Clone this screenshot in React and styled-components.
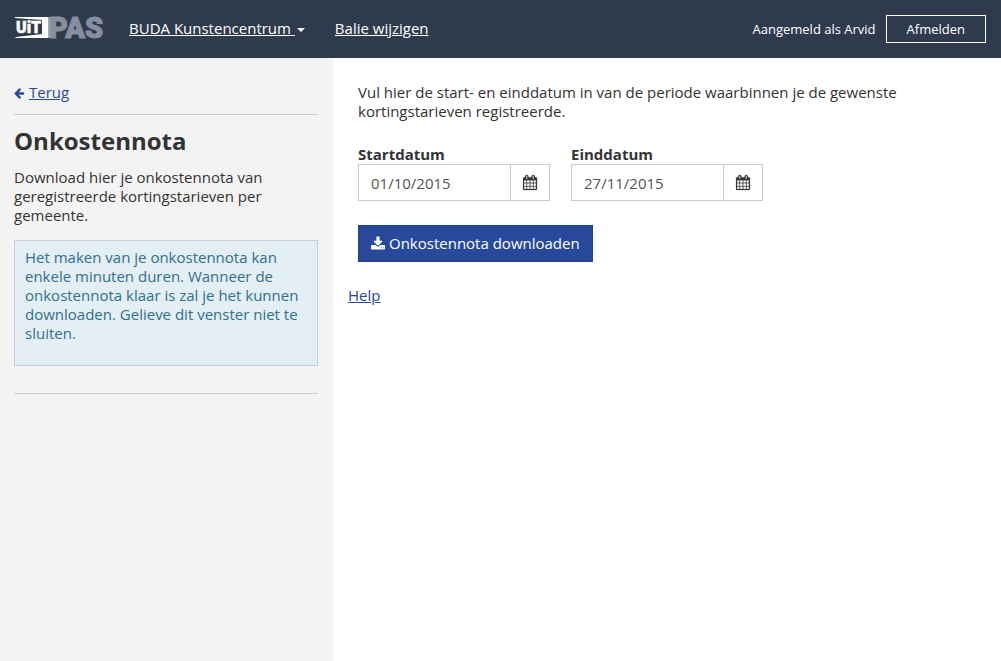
import React, { useState } from "react";
import styled, { createGlobalStyle } from "styled-components";

const GlobalStyle = createGlobalStyle`
  *, *::before, *::after { box-sizing: border-box; }
  body {
    margin: 0;
    background: #fff;
    color: #333;
    font-family: "Open Sans", sans-serif;
    font-size: 15px;
    line-height: 19px;
  }
  input, button { font: inherit; border-radius: 0; margin: 0; }
`;

const Page = styled.div`
  min-height: 100vh;
  display: flex;
  flex-direction: column;
`;

const Header = styled.header`
  display: flex;
  align-items: center;
  justify-content: space-between;
  min-height: 58px;
  padding: 0 15px;
  background: #2f3a4d;
  color: #fff;
`;

const Nav = styled.nav`
  display: flex;
  align-items: center;
  padding-bottom: 2px;
`;

const LogoLink = styled.a`
  display: block;
  margin-right: 22px;
`;

const NavLink = styled.a`
  display: flex;
  align-items: center;
  margin-right: 30px;
  color: #fff;
  white-space: pre;
`;

const Caret = styled.span`
  margin-left: 2px;
  margin-top: 4px;
  border-top: 4px solid #fff;
  border-left: 4px solid transparent;
  border-right: 4px solid transparent;
`;

const Account = styled.div`
  display: flex;
  align-items: center;
  gap: 10px;
  font-size: 13px;
`;

const LogoutButton = styled.button`
  height: 28px;
  padding: 0 20px;
  border: 1px solid #fff;
  background: transparent;
  color: #fff;
  cursor: pointer;
`;

const Columns = styled.div`
  flex: 1;
  display: grid;
  grid-template-columns: calc((100% - 2px) / 3) 1fr;
`;

const Sidebar = styled.aside`
  padding: 25px 15px 25px 14px;
  background: #f3f3f3;
`;

const BackLink = styled.a`
  display: inline-flex;
  align-items: center;
  gap: 4px;
  color: #28499b;
  text-decoration: none;

  span { text-decoration: underline; }
  svg { margin-top: 2px; }
`;

const Divider = styled.hr`
  height: 1px;
  margin: 0;
  border: 0;
  background: #ccc;
`;

const BackRow = styled.div`
  display: flex;
  padding-bottom: 12px;
`;

const Title = styled.h1`
  margin: 12px 0 13px;
  font-size: 24px;
  line-height: 28px;
  font-weight: 700;
`;

const Text = styled.p`
  margin: 0;
`;

const Notice = styled.div`
  margin: 15px 0 27px;
  padding: 7px 10px 22px;
  border: 1px solid #bfcfe4;
  background: #e3eef5;
  color: #31708f;
`;

const Main = styled.main`
  padding: 25px 25px 25px 15px;
`;

const Form = styled.form`
  padding-left: 10px;
`;

const Fields = styled.div`
  display: flex;
  flex-wrap: wrap;
  gap: 21px;
  margin: 24px 0;
`;

const Field = styled.div`
  width: 192px;
`;

const Label = styled.label`
  display: block;
  font-weight: 700;
`;

const InputGroup = styled.div`
  display: flex;
  height: 37px;
  border: 1px solid #ccc;
`;

const DateInput = styled.input`
  flex: 1;
  min-width: 0;
  padding: 1px 12px 0;
  border: 0;
  background: #fff;
  color: #555;
`;

const CalendarButton = styled.button`
  display: flex;
  align-items: center;
  justify-content: center;
  width: 39px;
  padding: 0;
  border: 0;
  border-left: 1px solid #ccc;
  background: #fff;
  color: #333;
  cursor: pointer;
`;

const DownloadButton = styled.button`
  display: flex;
  align-items: center;
  gap: 4px;
  height: 37px;
  padding: 0 12px;
  border: 1px solid #23408a;
  background: #28499b;
  color: #fff;
  cursor: pointer;
`;

const HelpLink = styled.a`
  display: inline-block;
  margin-top: 24px;
  color: #28499b;
`;

const Svg = styled.svg`
  display: block;
  flex: none;
  fill: currentColor;
  overflow: visible;
`;

const ArrowLeftIcon = () => (
  <Svg width="11" height="11" viewBox="128 128 1664 1664" aria-hidden="true">
    <path d="M1664 896v128q0 53-32.500 90.500t-84.500 37.500h-704l293 294q38 36 38 90t-38 90l-75 76q-37 37-90 37-52 0-91-37l-651-652q-37-37-37-90 0-52 37-91l651-650q38-38 91-38 52 0 90 38l75 74q38 38 38 91t-38 91l-293 293h704q52 0 84.500 37.500t32.500 90.500z" />
  </Svg>
);

const CalendarIcon = () => (
  <Svg width="14" height="15" viewBox="64 0 1664 1792" aria-hidden="true">
    <path stroke="currentColor" strokeWidth="24" d="M192 1664h288v-288h-288v288zm352 0h320v-288h-320v288zm-352-352h288v-320h-288v320zm352 0h320v-320h-320v320zm-352-384h288v-288h-288v288zm736 736h320v-288h-320v288zm-384-736h320v-288h-320v288zm768 736h288v-288h-288v288zm-384-352h320v-320h-320v320zm-352-864v-288q0-13-9.500-22.500t-22.500-9.500h-64q-13 0-22.500 9.500t-9.500 22.500v288q0 13 9.500 22.500t22.500 9.500h64q13 0 22.500-9.500t9.500-22.500zm736 864h288v-320h-288v320zm-384-384h320v-288h-320v288zm384 0h288v-288h-288v288zm32-480v-288q0-13-9.500-22.500t-22.500-9.500h-64q-13 0-22.500 9.500t-9.500 22.500v288q0 13 9.500 22.500t22.500 9.500h64q13 0 22.500-9.500t9.500-22.500zm384-64v1280q0 52-38 90t-90 38h-1408q-52 0-90-38t-38-90v-1280q0-52 38-90t90-38h128v-96q0-66 47-113t113-47h64q66 0 113 47t47 113v96h384v-96q0-66 47-113t113-47h64q66 0 113 47t47 113v96h128q52 0 90 38t38 90z" />
  </Svg>
);

const DownloadIcon = () => (
  <Svg width="14" height="14" viewBox="64 64 1664 1664" aria-hidden="true">
    <path d="M1344 1344q0-26-19-45t-45-19-45 19-19 45 19 45 45 19 45-19 19-45zm256 0q0-26-19-45t-45-19-45 19-19 45 19 45 45 19 45-19 19-45zm128-224v320q0 40-28 68t-68 28h-1472q-40 0-68-28t-28-68v-320q0-40 28-68t68-28h465l135 136q58 56 136 56t136-56l136-136h464q40 0 68 28t28 68zm-325-569q17 41-14 70l-448 448q-18 19-45 19t-45-19l-448-448q-31-29-14-70 17-39 59-39h256v-448q0-26 19-45t45-19h256q26 0 45 19t19 45v448h256q42 0 59 39z" />
  </Svg>
);

const Logo = () => (
  <Svg width="92" height="24" viewBox="0 0 92 24" role="img" aria-label="UiTPAS">
    <path fill="#fff" d="M0 1H33V22H0L1 21L27 18V4L0 2Z" />
    <rect x="33" y="1" width="3" height="21" fill="#a3aab6" />
    <text x="1" y="17" fill="#fff" stroke="#fff" strokeWidth="0.5" fontFamily="Roboto, sans-serif" fontWeight="900" fontSize="16">
      UiT
    </text>
    <text x="34" y="22" fill="#868f9d" stroke="#868f9d" strokeWidth="1" fontFamily="Roboto, sans-serif" fontWeight="900" fontSize="29">
      PAS
    </text>
  </Svg>
);

function DateField({ id, label, initial }) {
  const [value, setValue] = useState(initial);
  return (
    <Field>
      <Label htmlFor={id}>{label}</Label>
      <InputGroup>
        <DateInput id={id} type="text" value={value} onChange={(e) => setValue(e.target.value)} />
        <CalendarButton type="button" aria-label={`${label} kiezen`}>
          <CalendarIcon />
        </CalendarButton>
      </InputGroup>
    </Field>
  );
}

export default function App() {
  return (
    <Page>
      <GlobalStyle />
      <Header>
        <Nav>
          <LogoLink href="#">
            <Logo />
          </LogoLink>
          <NavLink href="#">
            {"BUDA Kunstencentrum "}
            <Caret />
          </NavLink>
          <NavLink href="#">Balie wijzigen</NavLink>
        </Nav>
        <Account>
          <span>Aangemeld als Arvid</span>
          <LogoutButton type="button">Afmelden</LogoutButton>
        </Account>
      </Header>
      <Columns>
        <Sidebar>
          <BackRow>
            <BackLink href="#">
              <ArrowLeftIcon />
              <span>Terug</span>
            </BackLink>
          </BackRow>
          <Divider />
          <Title>Onkostennota</Title>
          <Text>Download hier je onkostennota van geregistreerde kortingstarieven per gemeente.</Text>
          <Notice>
            Het maken van je onkostennota kan enkele minuten duren. Wanneer de onkostennota klaar is
            zal je het kunnen downloaden. Gelieve dit venster niet te sluiten.
          </Notice>
          <Divider />
        </Sidebar>
        <Main>
          <Form onSubmit={(e) => e.preventDefault()}>
            <Text>
              Vul hier de start- en einddatum in van de periode waarbinnen je de gewenste
              kortingstarieven registreerde.
            </Text>
            <Fields>
              <DateField id="start" label="Startdatum" initial="01/10/2015" />
              <DateField id="end" label="Einddatum" initial="27/11/2015" />
            </Fields>
            <DownloadButton type="submit">
              <DownloadIcon />
              Onkostennota downloaden
            </DownloadButton>
          </Form>
          <HelpLink href="#">Help</HelpLink>
        </Main>
      </Columns>
    </Page>
  );
}
